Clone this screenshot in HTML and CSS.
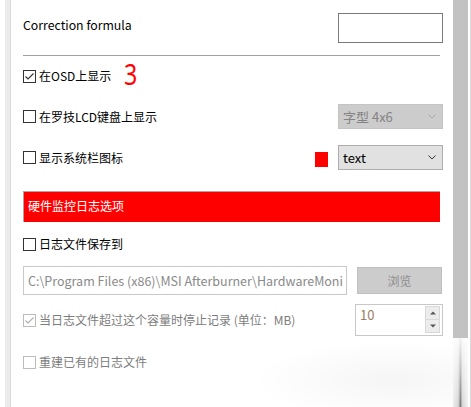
FILE: index.html
```html
<!DOCTYPE html>
<html>
<head>
<meta charset="utf-8">
<link rel="stylesheet" href="styles.css">
</head>
<body>
<div class="window">
  <div class="gutter"></div>
  <div class="main">
    <div class="row r-formula">
      <span class="label">Correction formula</span>
      <div class="textbox"></div>
    </div>
    <div class="divider"></div>
    <div class="row r-osd">
      <span class="check"><span class="box"><svg width="11" height="11" viewBox="0 0 11 11"><path d="M1.5 5.5 L4 8 L9.5 2.5" fill="none" stroke="#333" stroke-width="1.1"/></svg></span><span class="text">在OSD上显示</span></span>
      <span class="mark3">3</span>
    </div>
    <div class="row r-lcd">
      <span class="check"><span class="box"></span><span class="text">在罗技LCD键盘上显示</span></span>
      <div class="select disabled"><span>字型 4x6</span><svg class="chev" width="8" height="5" viewBox="0 0 8 5"><path d="M0.5 0.5 L4 4 L7.5 0.5" fill="none" stroke="#a8a8a8" stroke-width="1"/></svg></div>
    </div>
    <div class="row r-tray">
      <span class="check"><span class="box"></span><span class="text">显示系统栏图标</span></span>
      <span class="spacer"></span>
      <span class="swatch"></span>
      <div class="select"><span>text</span><svg class="chev" width="8" height="5" viewBox="0 0 8 5"><path d="M0.5 0.5 L4 4 L7.5 0.5" fill="none" stroke="#333" stroke-width="1"/></svg></div>
    </div>
    <div class="banner">硬件监控日志选项</div>
    <div class="row r-log">
      <span class="check"><span class="box"></span><span class="text">日志文件保存到</span></span>
    </div>
    <div class="row r-path">
      <div class="path">C:\Program Files (x86)\MSI Afterburner\HardwareMoni</div>
      <div class="btn">浏览</div>
    </div>
    <div class="row r-limit">
      <span class="check dis"><span class="box"><svg width="11" height="11" viewBox="0 0 11 11"><path d="M1.5 5.5 L4 8 L9.5 2.5" fill="none" stroke="#b0b0b0" stroke-width="1.1"/></svg></span><span class="text">当日志文件超过这个容量时停止记录 (单位：MB)</span></span>
      <div class="spin">
        <span class="val">10</span>
        <div class="arrows">
          <div class="arr"><svg width="6" height="4" viewBox="0 0 6 4"><path d="M0 3.5 L3 0.5 L6 3.5 Z" fill="#555"/></svg></div>
          <div class="arr"><svg width="6" height="4" viewBox="0 0 6 4"><path d="M0 0.5 L3 3.5 L6 0.5 Z" fill="#555"/></svg></div>
        </div>
      </div>
    </div>
    <div class="row r-rebuild">
      <span class="check dis"><span class="box"></span><span class="text">重建已有的日志文件</span></span>
    </div>
    <div class="shade"></div>
  </div>
  <div class="scroll">
    <div class="thumb"></div>
    <div class="fade"></div>
  </div>
  <div class="edge"></div>
</div>
</body>
</html>
```
FILE: styles.css
```css
html, body {
  margin: 0;
  padding: 0;
  background: #fff;
}
.window {
  display: flex;
  width: 471px;
  height: 407px;
  overflow: hidden;
  background: #fff;
  font-family: "Noto Sans CJK SC", "Noto Sans", sans-serif;
  font-size: 12px;
  color: #000;
}
.gutter {
  width: 5px;
  margin-left: 5px;
  background: #ebebeb;
  border-right: 1px solid #dadada;
}
.main {
  position: relative;
  width: 442px;
  box-sizing: border-box;
  padding: 13px 10px 0 12px;
  display: flex;
  flex-direction: column;
}
.row {
  display: flex;
  align-items: center;
}
.r-formula {
  height: 30px;
  align-items: flex-start;
  justify-content: space-between;
}
.label {
  margin-top: 4px;
  line-height: 17px;
  font-size: 12.3px;
}
.textbox {
  width: 105px;
  height: 30px;
  box-sizing: border-box;
  border: 1px solid #7a7a7a;
}
.divider {
  margin-top: 12px;
  width: 417px;
  height: 1px;
  background: #a0a0a0;
}
.r-osd {
  margin-top: 7px;
  height: 26px;
}
.r-lcd {
  margin-top: 15px;
  height: 25px;
  justify-content: space-between;
}
.r-tray {
  margin-top: 16px;
  height: 25px;
}
.r-log {
  margin-top: 14px;
  height: 16px;
}
.r-path {
  margin-top: 14px;
  height: 29px;
}
.r-limit {
  margin-top: 9px;
  height: 32px;
  justify-content: space-between;
}
.r-rebuild {
  margin-top: 18px;
  height: 16px;
}
.check {
  display: flex;
  align-items: center;
  line-height: 16px;
}
.box {
  width: 13px;
  height: 13px;
  box-sizing: border-box;
  border: 1px solid #333;
  background: #fff;
  margin-right: 3px;
  display: flex;
  align-items: center;
  justify-content: center;
}
.box svg {
  display: block;
}
.check.dis .box {
  border-color: #bcbcbc;
}
.check.dis .text {
  color: #7d7d7d;
}
.mark3 {
  display: inline-block;
  margin-left: 13px;
  margin-top: -4px;
  font-family: "Noto Sans", sans-serif;
  font-weight: 400;
  font-size: 29px;
  line-height: 28px;
  color: #ff0000;
  transform: scaleX(0.8);
  transform-origin: left center;
}
.spacer {
  flex: 1;
}
.swatch {
  width: 13px;
  height: 15px;
  background: #ff0000;
  margin-top: 4px;
  margin-right: 10px;
}
.select {
  width: 105px;
  height: 25px;
  box-sizing: border-box;
  border: 1px solid #adadad;
  background: #e1e1e1;
  display: flex;
  align-items: center;
  justify-content: space-between;
  padding: 0 6px 0 4px;
  font-size: 13px;
}
.select.disabled {
  background: #cccccc;
  border-color: #c4c4c4;
  color: #838383;
}
.chev {
  display: block;
}
.banner {
  margin-top: 21px;
  width: 417px;
  height: 31px;
  box-sizing: border-box;
  border-top: 1px solid #a8a8a8;
  border-left: 1px solid #a8a8a8;
  background: #ff0000;
  color: #fff;
  padding-left: 4px;
  line-height: 28px;
  font-size: 12px;
}
.path {
  width: 324px;
  height: 29px;
  box-sizing: border-box;
  border: 1px solid #c9c9c9;
  color: #8a8a8a;
  padding-left: 4px;
  line-height: 27px;
  white-space: nowrap;
  font-size: 12.5px;
}
.btn {
  margin-left: 10px;
  width: 85px;
  height: 27px;
  box-sizing: border-box;
  background: #cccccc;
  border: 1px solid #c0c0c0;
  color: #8c8c8c;
  display: flex;
  align-items: center;
  justify-content: center;
}
.spin {
  width: 88px;
  height: 32px;
  box-sizing: border-box;
  border: 1px solid #c8c8c8;
  padding: 1px 2px 2px 4px;
  display: flex;
  justify-content: space-between;
}
.val {
  color: #9a7d5f;
  font-size: 13px;
  line-height: 18px;
}
.arrows {
  width: 15px;
  display: flex;
  flex-direction: column;
}
.arr {
  flex: 1;
  background: #ececec;
  border: 1px solid #d8d8d8;
  display: flex;
  align-items: center;
  justify-content: center;
}
.arr + .arr {
  border-top: none;
}
.shade {
  position: absolute;
  left: 240px;
  right: 0;
  top: 340px;
  bottom: 0;
  background: radial-gradient(ellipse at 70% 60%, rgba(0,0,0,0.04), rgba(0,0,0,0) 70%);
}
.scroll {
  width: 15px;
  display: flex;
  flex-direction: column;
}
.thumb {
  height: 338px;
  background: #c2c2c2;
}
.fade {
  flex: 1;
  background:
    linear-gradient(to bottom, rgba(255,255,255,0.9), rgba(255,255,255,0.3) 70%, rgba(255,255,255,0)),
    linear-gradient(to right, #ededed 0%, #d6d6d6 35%, #7a7a7a 50%, #d6d6d6 62%, #f2f2f2 100%);
}
.edge {
  margin-left: 2px;
  width: 1px;
  background: #d9d9d9;
}
```
